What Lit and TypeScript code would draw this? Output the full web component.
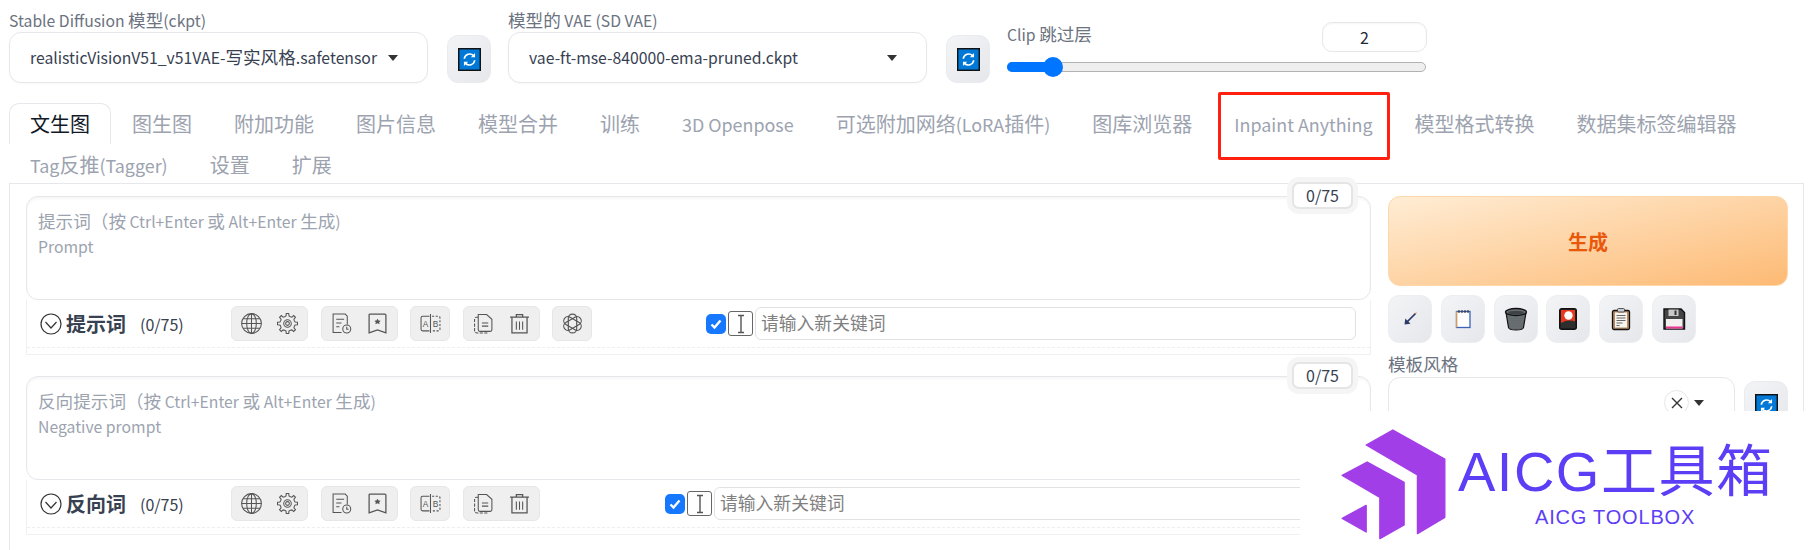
import { LitElement, html, css, svg } from "lit";
import { customElement } from "lit/decorators.js";

/* Wraps ASCII runs so their size can be set apart from the CJK glyphs. */
const mix = (s: string) => s.split(/([\x00-\x7f]+)/).map((p, i) => (i % 2 ? html`<span class="l">${p}</span>` : p));

const gearPath = (() => {
  const pts: string[] = [];
  const n = 8;
  for (let i = 0; i < n; i++) {
    const a = (i / n) * Math.PI * 2;
    const step = (Math.PI * 2) / n;
    const p = (r: number, t: number) => `${(10 + r * Math.cos(t)).toFixed(2)} ${(10 + r * Math.sin(t)).toFixed(2)}`;
    pts.push(`${i === 0 ? "M" : "L"}${p(7, a - step * 0.5)}`);
    pts.push(`L${p(7.4, a - step * 0.24)}`);
    pts.push(`L${p(9.6, a - step * 0.16)}`);
    pts.push(`L${p(9.6, a + step * 0.16)}`);
    pts.push(`L${p(7.4, a + step * 0.24)}`);
  }
  return pts.join(" ") + " Z";
})();

const refresh = html`<svg class="ref" viewBox="0 0 24 24" width="23" height="23">
  <rect x="0.75" y="0.75" width="22.5" height="22.5" fill="#0078d7" stroke="#111" stroke-width="1.5"></rect>
  <path d="M6.6 11.2a5.6 5.6 0 0 1 9.6-3.2M17.4 12.8a5.6 5.6 0 0 1-9.6 3.2" fill="none" stroke="#fff" stroke-width="1.7"></path>
  <path d="M17.8 5.2v4.4h-4.4zM6.2 18.8v-4.4h4.4z" fill="#fff"></path>
</svg>`;

const ic = (body: unknown) => html`<svg class="ico" viewBox="0 0 20 20" width="21" height="21" fill="none" stroke="#555" stroke-width="1">${body}</svg>`;

const icons = {
  globe: ic(svg`<circle cx="10" cy="10" r="9.4"></circle><ellipse cx="10" cy="10" rx="4.6" ry="9.4"></ellipse><path d="M10 .6v18.8M.6 10h18.8M1.8 5.4h16.4M1.8 14.6h16.4"></path>`),
  gear: ic(svg`<path d=${gearPath}></path><circle cx="10" cy="10" r="3.6"></circle><circle cx="10" cy="10" r="1.8"></circle>`),
  history: ic(svg`<path d="M10 18.5H2V1h11.5l2 2v8"></path><path d="M5 6h7.5M5 9.5h5M5 13h3"></path><circle cx="15" cy="15.2" r="3.8"></circle><path d="M15 13v2.4h1.8"></path>`),
  mark: ic(svg`<path d="M3 1h14q1 0 1 1v17l-8-3-8 3V2q0-1 1-1z" stroke-width="1.2"></path><path d="M10 5.4l1 1.8 2 .2-1.400 1.400.4 2-2-1-2 1 .4-2L7 7.400l2-.2z" fill="#555" stroke="none"></path>`),
  ab: ic(svg`<path d="M9 3H2.500q-1.500 0-1.500 1.500v11Q1 17 2.500 17H9M10 1v18"></path><path d="M11.500 3h6q1.500 0 1.500 1.500v11q0 1.500-1.500 1.500h-6" stroke-dasharray="2 1.500"></path><text x="5.400" y="13.400" class="ab" fill="#555" stroke="none" text-anchor="middle">A</text><text x="14.800" y="13.400" class="ab" fill="#555" stroke="none" text-anchor="middle">B</text>`),
  copy: ic(svg`<path d="M5 1.500h8l5 4.500v10q0 1.500-1.500 1.500h-10Q5 17.500 5 16z"></path><path d="M5 4H3Q1.500 4 1.500 5.500v11Q1.500 19 4 19h10" stroke-dasharray="3 1.300"></path><path d="M8.500 9.500h6M8.500 12.500h6"></path>`),
  trash: ic(svg`<path d="M1 4h18M7 4V1.500h6V4M2.800 4.500V19h14.400V4.500" stroke-width="1.200"></path><path d="M7 8v8M10 8v8M13 8v8"></path>`),
  ai: ic(svg`<g stroke-width="1.100"><rect x="6" y="1" width="8" height="18" rx="4"></rect><rect x="6" y="1" width="8" height="18" rx="4" transform="rotate(60 10 10)"></rect><rect x="6" y="1" width="8" height="18" rx="4" transform="rotate(120 10 10)"></rect></g>`),
};

const tool = (body: unknown) => html`<button class="tool"><svg viewBox="0 0 24 24" width="24" height="24">${body}</svg></button>`;

const tools = [
  tool(svg`<path d="M17.500 6.500L8 16" stroke="#2b3a67" stroke-width="1.700" fill="none"></path><path d="M6.500 17.500l.8-6 5.200 5.200z" fill="#2b3a67"></path><path d="M17.500 5.800l.7.7" stroke="#e08a3c" stroke-width="1.700"></path>`),
  tool(svg`<rect x="5.500" y="4.500" width="13.500" height="16" fill="#fff" stroke="#3c62b8" stroke-width="1.300"></rect><path d="M5.500 4.500V20.500" stroke="#d99a55" stroke-width="1.300"></path><path d="M8 3v3M11 3v3M14 3v3M17 3v3" stroke="#333" stroke-width="1.100"></path>`),
  tool(svg`<defs><pattern id="mesh" width="2" height="2" patternUnits="userSpaceOnUse"><rect width="2" height="2" fill="#70777a"></rect><circle cx="1" cy="1" r=".5" fill="#3c4245"></circle></pattern></defs><path d="M2 5.500l2.500 15q.5 2.500 7.500 2.500t7.500-2.500L22 5.500z" fill="url(#mesh)" stroke="#111" stroke-width="1.200"></path><ellipse cx="12" cy="5" rx="10.500" ry="3.500" fill="#6b7275" stroke="#111" stroke-width="1.300"></ellipse><ellipse cx="12" cy="5.600" rx="8" ry="1.800" fill="#3d4346"></ellipse>`),
  tool(svg`<rect x="3.700" y="1.700" width="16.600" height="20.600" rx="2" fill="#2b2b2b" stroke="#111" stroke-width="1.400"></rect><rect x="5" y="3" width="14" height="13" fill="#e8391c"></rect><circle cx="12.500" cy="8.500" r="4.200" fill="#fff"></circle><path d="M5 16q7-4 14-1.500V21H5z" fill="#2e2e2e"></path>`),
  tool(svg`<rect x="3.500" y="3.500" width="17" height="19" rx="1.500" fill="#b58a62" stroke="#111" stroke-width="1.300"></rect><rect x="6" y="5.500" width="12" height="15" fill="#f7f5f0"></rect><rect x="8.500" y="1.500" width="7" height="3.500" rx="1" fill="#c9cdd2" stroke="#333" stroke-width=".8"></rect><path d="M7.500 8.500h9M7.500 11h9M7.500 13.500h9M7.500 16h6M7.500 18.500h3" stroke="#666" stroke-width="1"></path>`),
  tool(svg`<path d="M2 2h17l3.500 3.500V22H2z" fill="#444" stroke="#111" stroke-width="1.400"></path><rect x="6.500" y="2.500" width="10" height="6.500" fill="#c8c8c8"></rect><rect x="12.500" y="3.500" width="2" height="4.500" fill="#333"></rect><rect x="4" y="12" width="16.500" height="9.500" fill="#f5f0f0"></rect><rect x="4" y="19.500" width="16.500" height="2" fill="#e8368f"></rect>`),
];

const row1 = ["文生图", "图生图", "附加功能", "图片信息", "模型合并", "训练", "3D Openpose", "可选附加网络(LoRA插件)", "图库浏览器", "Inpaint Anything", "模型格式转换", "数据集标签编辑器"];
const row2 = ["Tag反推(Tagger)", "设置", "扩展"];

@customElement("app-root")
export class AppRoot extends LitElement {
  static styles = css`
    :host {
      display: block;
      position: relative;
      width: 1816px;
      height: 550px;
      overflow: hidden;
      background: #fff;
      font-family: "Noto Sans CJK SC", "Noto Sans", sans-serif;
      color: #1f2937;
    }
    * { box-sizing: border-box; }
    .l { font-size: .895em; }
    .top { display: flex; height: 103px; padding-left: 9px; }
    .field { width: 419px; flex: none; }
    .lab { height: 32px; font-size: 17.600px; line-height: 40px; color: #6b7280; white-space: nowrap; }
    .select {
      height: 51px; border: 1px solid #e5e7eb; border-radius: 12px; background: #fff;
      display: flex; align-items: center; padding: 0 20px; font-size: 17.600px; gap: 8px;
      box-shadow: 0 1px 2px rgba(0,0,0,.03);
    }
    .select .val { flex: 1; overflow: hidden; white-space: nowrap; color: #374151; line-height: 24px; margin-top: -1px; }
    .arrow { width: 0; height: 0; border-left: 5px solid transparent; border-right: 5px solid transparent; border-top: 6px solid #333; flex: none; margin-right: 9px; }
    .refresh {
      flex: none; width: 44px; height: 48px; margin: 35px 17px 0 19px; border: 1px solid #e9ebef; border-radius: 11px;
      background: linear-gradient(to bottom right, #f3f4f6, #e5e7eb); padding: 0;
      display: flex; align-items: center; justify-content: center;
    }
    .clip { width: 420px; flex: none; display: flex; flex-direction: column; }
    .clip-head { display: flex; justify-content: space-between; height: 53px; padding-top: 22px; }
    .clip-lab { font-size: 17.600px; color: #6b7280; line-height: 24px; }
    .num { width: 105px; height: 30px; border: 1px solid #e5e7eb; border-radius: 10px; text-align: center; font-size: 16px; line-height: 28px; padding-right: 20px; color: #1f2937; box-shadow: inset 0 1px 2px rgba(0,0,0,.04); }
    .slider { position: relative; height: 10px; margin-top: 9px; margin-right: 1px; border: 1px solid #b2b2b2; border-radius: 5px; background: #efefef; }
    .fill { position: absolute; left: -1px; top: -1px; bottom: -1px; width: 46px; background: #0075ff; border-radius: 5px 0 0 5px; }
    .thumb { position: absolute; left: 35px; top: -6px; width: 20px; height: 20px; border-radius: 50%; background: #0075ff; }

    .tabs { height: 80px; padding-left: 9px; display: flex; flex-direction: column; position: relative; }
    .tabrow { display: flex; height: 41px; flex: none; }
    .tab { flex: none; padding: 0 21px; font-size: 20px; line-height: 41px; color: #9ca3af; white-space: nowrap; }
    .tab.on { color: #111827; border: 1px solid #e5e7eb; border-bottom: 0; border-radius: 10px 10px 0 0; padding: 0 20px; line-height: 39px; }
    .redbox { position: absolute; left: 1218px; top: -11px; width: 172px; height: 68px; border: 3px solid #ff2010; border-radius: 2px; }

    .panel { margin: 0 12px 0 9px; height: 400px; border: 1px solid #e5e7eb; padding: 12px 16px 0; display: grid; grid-template-columns: 1345px 400px; column-gap: 17px; align-content: start; }
    .left { display: flex; flex-direction: column; gap: 21px; }
    .sec { position: relative; }
    .prompt { height: 104px; border: 1px solid #e5e7eb; border-radius: 12px; padding: 12px 11px; font-size: 17.600px; line-height: 24px; color: #9ca3af; box-shadow: inset 0 2px 3px rgba(0,0,0,.04); }
    .badge { position: absolute; left: 1266px; top: -14px; width: 61px; height: 27px; background: #fff; border: 2px solid #e5e5e5; border-radius: 7px; box-shadow: 0 0 0 5px #f5f5f5; text-align: center; font-size: 16px; line-height: 23px; color: #374151; }
    .bar { height: 55px; border: 1px solid #f0f0f0; border-top: 0; padding-bottom: 6px; }
    .barin { height: 48px; border-bottom: 1px dashed #eeeeee; display: flex; align-items: center; padding: 0 14px 0 13px; }
    .head { width: 191px; flex: none; display: flex; align-items: center; }
    .title { font-size: 20px; font-weight: 700; color: #374151; margin-left: 4px; line-height: 24px; }
    .cnt { font-size: 16px; color: #374151; margin-left: 14px; line-height: 24px; }
    .groups { display: flex; gap: 12.500px; flex: none; }
    .grp { height: 35px; background: #efefef; border: 1px solid #e7e7e7; border-radius: 6px; display: flex; align-items: center; justify-content: space-between; padding: 0 9px; flex: none; }
    .grp.w2 { width: 77px; }
    .grp.w1 { width: 40px; padding: 0; justify-content: center; }
    .kw { margin-left: auto; display: flex; align-items: center; flex: none; }
    .kw.a { width: 650px; }
    .kw.b { width: 691px; }
    .check { width: 20px; height: 20px; border-radius: 5px; background: #1677ff; flex: none; display: flex; align-items: center; justify-content: center; margin-right: 2px; }
    .ibeam { width: 25px; height: 25px; border: 1.500px solid #666; border-radius: 3px; flex: none; margin-right: 2px; display: flex; align-items: center; justify-content: center; }
    .input { flex: 1; height: 33px; border: 1px solid #e2e2e2; border-radius: 6px; padding: 0 5px; font-size: 17.800px; line-height: 29px; color: #808080; white-space: nowrap; }
    .ab { font-size: 8px; font-family: "Liberation Sans", sans-serif; }

    .right { display: flex; flex-direction: column; }
    .gen { height: 90px; border: 1px solid #fed7aa; border-radius: 12px; background: linear-gradient(to bottom right, #ffedd5, #fdba74); color: #ea580c; font-size: 20px; font-weight: 700; font-family: inherit; padding: 0; }
    .tools { display: flex; gap: 9px; margin-top: 9px; }
    .tool { width: 44px; height: 48px; border: 1px solid #eceef1; border-radius: 11px; background: linear-gradient(to bottom right, #f3f4f6, #e5e7eb); padding: 0; display: flex; align-items: center; justify-content: center; flex: none; }
    .tools .tool:nth-child(3) { margin-right: -1px; }
    .style-lab { font-size: 17.600px; color: #6b7280; line-height: 24px; margin-top: 9px; }
    .style-row { display: flex; gap: 9px; margin-top: 1px; }
    .style-sel { width: 347px; height: 60px; border: 1px solid #e5e7eb; border-radius: 12px; display: flex; align-items: flex-start; justify-content: flex-end; padding: 12px 30px 0 0; gap: 5px; flex: none; }
    .x { width: 25px; height: 25px; border: 1px solid #e5e7eb; border-radius: 50%; display: flex; align-items: center; justify-content: center; flex: none; }
    .style-sel .arrow { margin: 10px 0 0; }
    .style-row .refresh { margin: 4px 0 0; }

    .logo { position: absolute; left: 1300px; top: 411px; width: 516px; height: 139px; background: #fff; }
    .logo svg { position: absolute; left: 0; top: 0; }
    .logo-t { position: absolute; left: 158px; top: 24px; font-size: 56px; letter-spacing: 1.500px; line-height: 74px; color: #5b3ef5; font-family: "Liberation Sans", "Noto Sans CJK SC", sans-serif; white-space: nowrap; }
    .logo-s { position: absolute; left: 235px; top: 93px; font-size: 20px; letter-spacing: .8px; line-height: 26px; color: #5b3ef5; font-family: "Liberation Sans", sans-serif; white-space: nowrap; }
  `;

  private section(ph: string, sub: string, title: string, kw: string, extra: boolean) {
    return html`<div class="sec">
      <div class="prompt"><div>${mix(ph)}</div><div>${mix(sub)}</div></div>
      <div class="badge">0/75</div>
      <div class="bar"><div class="barin">
        <div class="head">
          <svg viewBox="0 0 22 22" width="22" height="22" fill="none" stroke="#333" stroke-width="1.200"><circle cx="11" cy="11" r="10"></circle><path d="M5.500 9l5.500 6 5.500-6"></path></svg>
          <span class="title">${title}</span><span class="cnt">(0/75)</span>
        </div>
        <div class="groups">
          <div class="grp w2">${icons.globe}${icons.gear}</div>
          <div class="grp w2">${icons.history}${icons.mark}</div>
          <div class="grp w1">${icons.ab}</div>
          <div class="grp w2">${icons.copy}${icons.trash}</div>
          ${extra ? html`<div class="grp w1">${icons.ai}</div>` : ""}
        </div>
        <div class="kw ${kw}">
          <div class="check"><svg viewBox="0 0 14 14" width="14" height="14" fill="none" stroke="#fff" stroke-width="2.400"><path d="M2.500 7.500l3 3 6-7"></path></svg></div>
          <div class="ibeam"><svg viewBox="0 0 12 20" width="12" height="20" fill="none" stroke="#555" stroke-width="1.400"><path d="M3 1.500h6M3 18.500h6M6 1.500v17"></path></svg></div>
          <div class="input">请输入新关键词</div>
        </div>
      </div></div>
    </div>`;
  }

  render() {
    return html`
      <div class="top">
        <div class="field">
          <div class="lab">${mix("Stable Diffusion 模型(ckpt)")}</div>
          <div class="select"><span class="val">${mix("realisticVisionV51_v51VAE-写实风格.safetensor")}</span><span class="arrow"></span></div>
        </div>
        <div class="refresh">${refresh}</div>
        <div class="field">
          <div class="lab">${mix("模型的 VAE (SD VAE)")}</div>
          <div class="select"><span class="val">${mix("vae-ft-mse-840000-ema-pruned.ckpt")}</span><span class="arrow"></span></div>
        </div>
        <div class="refresh">${refresh}</div>
        <div class="clip">
          <div class="clip-head"><span class="clip-lab">${mix("Clip 跳过层")}</span><span class="num">2</span></div>
          <div class="slider"><div class="fill"></div><div class="thumb"></div></div>
        </div>
      </div>
      <div class="tabs">
        <div class="tabrow">${row1.map((t, i) => html`<div class="tab ${i === 0 ? "on" : ""}">${mix(t)}</div>`)}</div>
        <div class="tabrow">${row2.map((t) => html`<div class="tab">${mix(t)}</div>`)}</div>
        <div class="redbox"></div>
      </div>
      <div class="panel">
        <div class="left">
          ${this.section("提示词（按 Ctrl+Enter 或 Alt+Enter 生成)", "Prompt", "提示词", "a", true)}
          ${this.section("反向提示词（按 Ctrl+Enter 或 Alt+Enter 生成)", "Negative prompt", "反向词", "b", false)}
        </div>
        <div class="right">
          <button class="gen">生成</button>
          <div class="tools">${tools}</div>
          <div class="style-lab">模板风格</div>
          <div class="style-row">
            <div class="style-sel">
              <span class="x"><svg viewBox="0 0 12 12" width="12" height="12" stroke="#333" stroke-width="1.400"><path d="M1 1l10 10M11 1L1 11"></path></svg></span>
              <span class="arrow"></span>
            </div>
            <div class="refresh">${refresh}</div>
          </div>
        </div>
      </div>
      <div class="logo">
        <svg width="516" height="139" viewBox="58.500 3 1509 417" preserveAspectRatio="none">
          <g fill="#a23ee8" stroke="#a23ee8" stroke-width="4" stroke-linejoin="round">
            <polygon points="252,105 330,60 482,147 482,322 402,371 402,195"></polygon>
            <polygon points="182,196 255,156 363,217 363,345 292,386 292,262"></polygon>
            <polygon points="182,325 252,286 252,366"></polygon>
          </g>
        </svg>
        <div class="logo-t">AICG工具箱</div>
        <div class="logo-s">AICG TOOLBOX</div>
      </div>
    `;
  }
}
